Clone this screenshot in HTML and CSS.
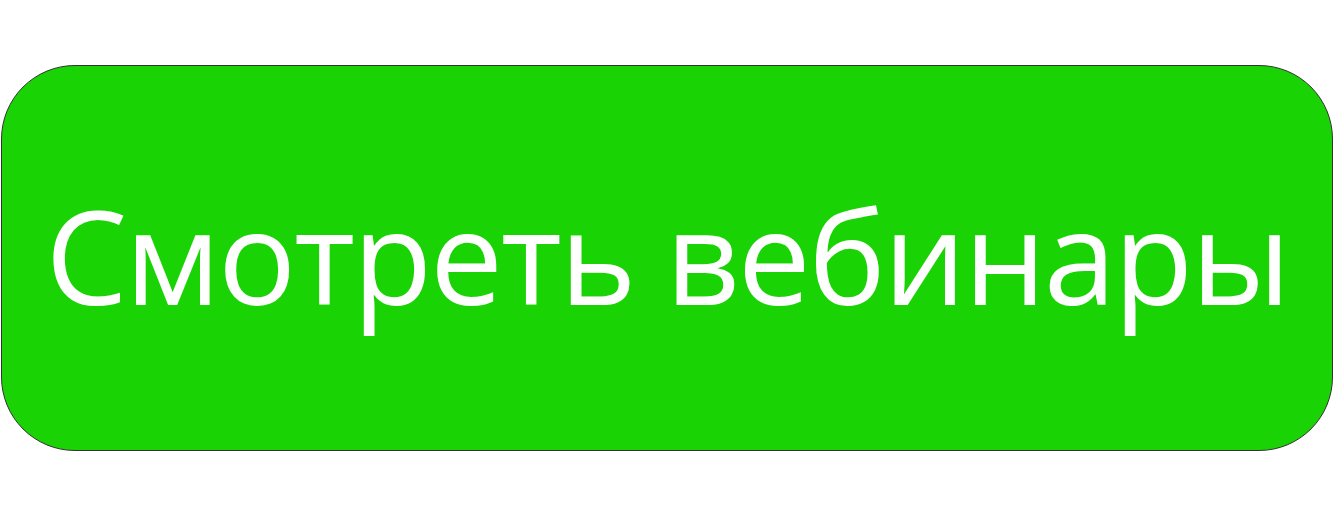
FILE: index.html
```html
<!DOCTYPE html>
<html lang="ru">
<head>
<meta charset="utf-8">
<link rel="stylesheet" href="styles.css">
</head>
<body>
<div class="page">
  <a class="btn" href="#"><span class="label">Смотреть вебинары</span></a>
</div>
</body>
</html>
```

FILE: styles.css
```css
html, body {
  margin: 0;
  padding: 0;
  background: #ffffff;
}
.page {
  padding: 65px 0 0 1px;
}
.btn {
  box-sizing: border-box;
  width: 1332px;
  height: 386px;
  display: flex;
  align-items: center;
  justify-content: center;
  background: #1ad305;
  border: 1px solid #333;
  border-radius: 74px;
  color: #ffffff;
  text-decoration: none;
  font-family: "Open Sans", "Noto Sans", sans-serif;
  font-size: 130px;
  line-height: 1;
}
.label {
  white-space: nowrap;
  letter-spacing: -2.3px;
  padding-bottom: 6px;
}
```
